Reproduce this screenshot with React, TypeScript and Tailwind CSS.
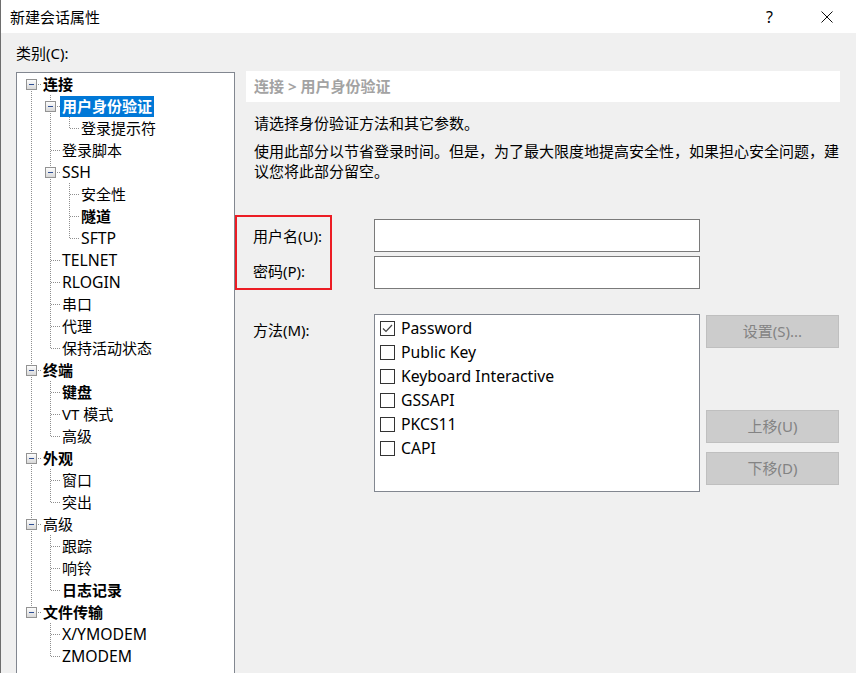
import React from "react";

interface Node {
  label: string;
  bold?: boolean;
  selected?: boolean;
  children?: Node[];
}

const TREE: Node[] = [
  {
    label: "连接",
    bold: true,
    children: [
      { label: "用户身份验证", bold: true, selected: true, children: [{ label: "登录提示符" }] },
      { label: "登录脚本" },
      {
        label: "SSH",
        children: [{ label: "安全性" }, { label: "隧道", bold: true }, { label: "SFTP" }],
      },
      { label: "TELNET" },
      { label: "RLOGIN" },
      { label: "串口" },
      { label: "代理" },
      { label: "保持活动状态" },
    ],
  },
  {
    label: "终端",
    bold: true,
    children: [{ label: "键盘", bold: true }, { label: "VT 模式" }, { label: "高级" }],
  },
  { label: "外观", bold: true, children: [{ label: "窗口" }, { label: "突出" }] },
  {
    label: "高级",
    children: [{ label: "跟踪" }, { label: "响铃" }, { label: "日志记录", bold: true }],
  },
  { label: "文件传输", bold: true, children: [{ label: "X/YMODEM" }, { label: "ZMODEM" }] },
];

// Flattened row: `last[k]` says whether the ancestor at depth k (self at the end)
// is the last of its siblings, which decides where the dotted guides continue.
interface Flat {
  node: Node;
  depth: number;
  last: boolean[];
  first: boolean;
}

function flatten(nodes: Node[], depth = 0, trail: boolean[] = [], out: Flat[] = []): Flat[] {
  nodes.forEach((n, i) => {
    const last = [...trail, i === nodes.length - 1];
    out.push({ node: n, depth, last, first: depth === 0 && i === 0 });
    if (n.children) flatten(n.children, depth + 1, last, out);
  });
  return out;
}

const DOT = "#8f8f8f";
// Latin-only labels run a touch larger, like Segoe UI next to YaHei.
const isLatin = (s: string) => /^[\x20-\x7e]+$/.test(s);

function Guide({ kind, last, first, box }: { kind: "pass" | "self"; last: boolean; first?: boolean; box?: boolean }) {
  return (
    <svg width="19" height="22" className="shrink-0 block">
      {kind === "pass" && !last && (
        <line x1="9.5" y1="0" x2="9.5" y2="22" stroke={DOT} strokeDasharray="1 1" />
      )}
      {kind === "self" && (
        <>
          {!first && <line x1="9.5" y1="0" x2="9.5" y2="11" stroke={DOT} strokeDasharray="1 1" />}
          {!last && <line x1="9.5" y1="12" x2="9.5" y2="22" stroke={DOT} strokeDasharray="1 1" />}
          <line x1="10" y1="11.5" x2="19" y2="11.5" stroke={DOT} strokeDasharray="1 1" />
          {box && (
            <>
              <defs>
                <linearGradient id="bx" x1="0" y1="0" x2="0" y2="1">
                  <stop offset="0" stopColor="#ffffff" />
                  <stop offset="1" stopColor="#d6d6d6" />
                </linearGradient>
              </defs>
              <rect x="4.5" y="6.5" width="10" height="10" fill="url(#bx)" stroke="#939393" />
              <line x1="7" y1="11.5" x2="12" y2="11.5" stroke="#2f4f94" />
            </>
          )}
        </>
      )}
    </svg>
  );
}

function Tree() {
  const rows = flatten(TREE);
  return (
    <div className="h-[620px] w-[219px] border border-[#828790] bg-white pl-[5px]">
      {rows.map((r, i) => (
        <div key={i} className="flex h-[22px] items-center">
          {r.last.slice(0, r.depth).map((l, k) => (
            <Guide key={k} kind="pass" last={l} />
          ))}
          <Guide kind="self" last={r.last[r.depth]} first={r.first} box={!!r.node.children} />
          <span
            className={`whitespace-nowrap px-[2px] leading-[21px] ${isLatin(r.node.label) ? "text-[15.75px]" : "text-[15px]"} ${
              r.node.bold ? "font-bold" : ""
            } ${r.node.selected ? "mt-px bg-[#0078d7] text-white" : "text-black"}`}
          >
            {r.node.label}
          </span>
        </div>
      ))}
    </div>
  );
}

function Check({ on }: { on?: boolean }) {
  return (
    <span className="flex h-[15px] w-[15px] shrink-0 items-center justify-center border border-[#333333] bg-white">
      {on && (
        <svg width="11" height="9" viewBox="0 0 11 9">
          <path d="M1 4.5 L4 7.5 L10 1" fill="none" stroke="#444444" strokeWidth="1.2" />
        </svg>
      )}
    </span>
  );
}

const METHODS = [
  { label: "Password", on: true },
  { label: "Public Key" },
  { label: "Keyboard Interactive" },
  { label: "GSSAPI" },
  { label: "PKCS11" },
  { label: "CAPI" },
];

function DisabledButton({ children, className = "" }: { children: React.ReactNode; className?: string }) {
  return (
    <div
      className={`flex h-[33px] w-[133px] items-center justify-center border border-[#bfbfbf] bg-[#cccccc] text-[15px] text-[#838383] ${className}`}
    >
      {children}
    </div>
  );
}

export default function App() {
  return (
    <div className="h-[673px] w-[856px] overflow-hidden border-l border-[#6e6e6e] bg-[#f0f0f0] font-['Noto_Sans','Noto_Sans_CJK_SC',sans-serif] text-black">
      {/* title bar */}
      <div className="flex h-[33px] items-center bg-white pl-[9px]">
        <span className="text-[15px] leading-5">新建会话属性</span>
        <span className="ml-auto mr-[48px] text-[16px] leading-5">?</span>
        <svg width="12" height="12" viewBox="0 0 12 12" className="mr-[23px]">
          <path d="M0.5 0.5 L11.5 11.5 M11.5 0.5 L0.5 11.5" stroke="#111111" strokeWidth="1" />
        </svg>
      </div>

      <div className="flex pl-[15px]">
        <div className="flex flex-col">
          <div className="mt-[10px] h-5 text-[15px] leading-5">类别(C):</div>
          <div className="mt-[9px]">
            <Tree />
          </div>
        </div>

        <div className="ml-[11px] flex w-[594px] flex-col pt-[38px]">
          <div className="flex h-[31px] items-center bg-white pl-2 text-[15px] font-bold text-[#a3a3a3]">
            连接 &gt; 用户身份验证
          </div>
          <p className="mt-[11px] pl-2 text-[15px] leading-5">请选择身份验证方法和其它参数。</p>
          <p className="mt-2 whitespace-nowrap pl-2 text-[15px] leading-5">
            使用此部分以节省登录时间。但是，为了最大限度地提高安全性，如果担心安全问题，建
            <br />
            议您将此部分留空。
          </p>

          <div className="relative mt-[38px] flex flex-col gap-1">
            <div className="flex items-center">
              <span className="w-[128px] pl-[7px] text-[15px] leading-5">用户名(U):</span>
              <div className="h-[33px] w-[326px] border border-[#7a7a7a] bg-white" />
            </div>
            <div className="flex items-center">
              <span className="-mt-1 w-[128px] pl-[7px] text-[15px] leading-5">密码(P):</span>
              <div className="h-[33px] w-[326px] border border-[#7a7a7a] bg-white" />
            </div>
            {/* annotation frame drawn over the labels */}
            <div className="pointer-events-none absolute left-[-11px] top-[-4px] h-[75px] w-[97px] border-2 border-[#ec1c24]" />
          </div>

          <div className="mt-[25px] flex">
            <span className="w-[128px] pl-[7px] pt-[6px] text-[15px] leading-5">方法(M):</span>
            <div className="h-[178px] w-[326px] border border-[#828790] bg-white pt-px">
              {METHODS.map((m) => (
                <div key={m.label} className="flex h-6 items-center pl-[5px]">
                  <Check on={m.on} />
                  <span className="ml-[6px] text-[15.75px] leading-5">{m.label}</span>
                </div>
              ))}
            </div>
            <div className="ml-[6px] flex flex-col pt-px">
              <DisabledButton>设置(S)...</DisabledButton>
              <DisabledButton className="mt-[62px]">上移(U)</DisabledButton>
              <DisabledButton className="mt-[9px]">下移(D)</DisabledButton>
            </div>
          </div>
        </div>
      </div>
    </div>
  );
}
